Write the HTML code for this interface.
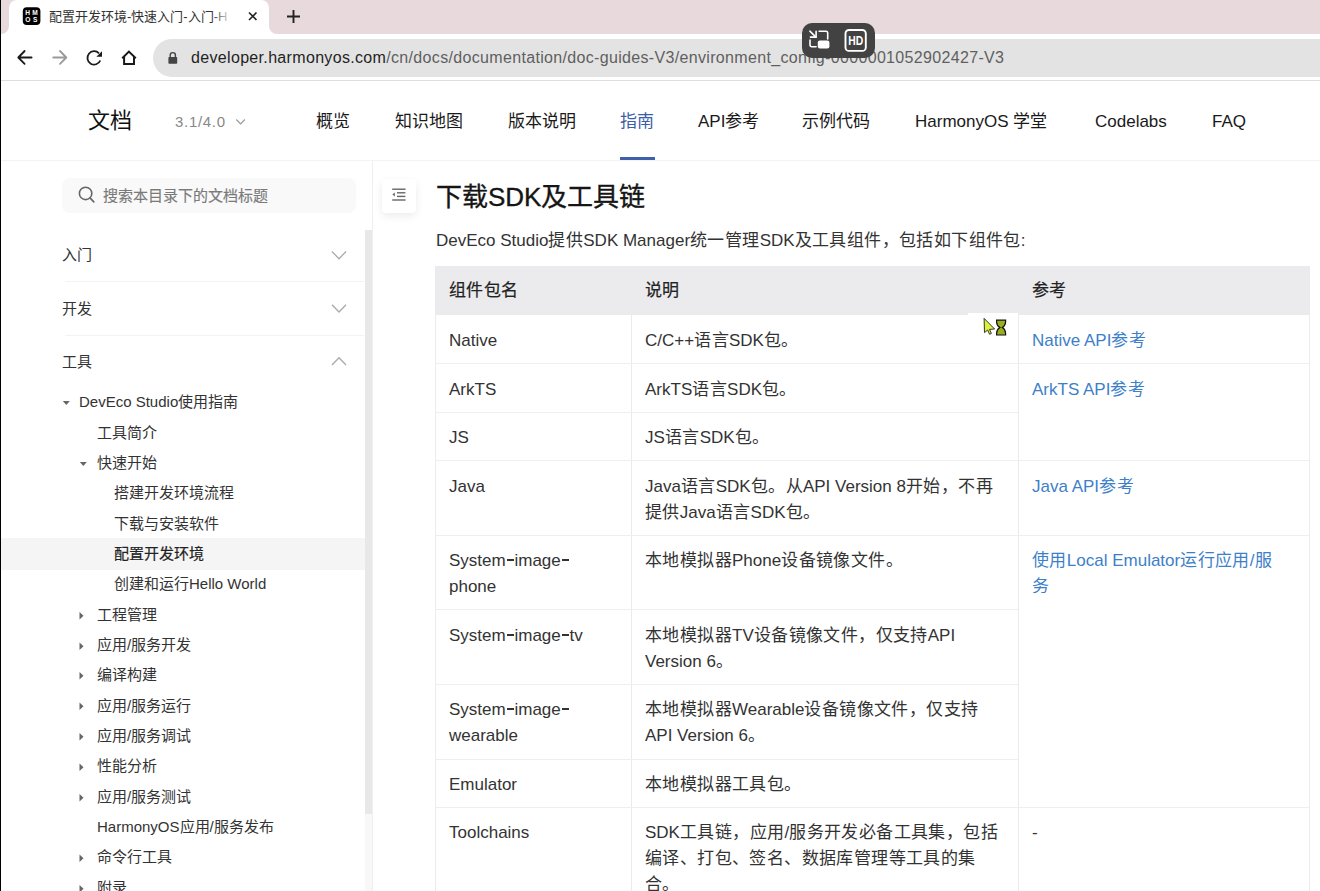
<!DOCTYPE html>
<html lang="zh-CN"><head><meta charset="utf-8">
<style>
*{box-sizing:border-box;margin:0;padding:0}
html,body{width:1320px;height:891px;overflow:hidden;background:#fff}
body{font-family:"Liberation Sans",sans-serif;color:#1a1a1a;position:relative}
.a{position:absolute;white-space:nowrap}
/* chrome */
#lb{left:0;top:0;width:1px;height:891px;background:#000;z-index:50}
#tabbar{left:0;top:0;width:1320px;height:34px;background:#e7d9dc}
#tab{left:9px;top:0;width:260px;height:40px;background:#fff;border-radius:8px 8px 0 0}
.flw{top:26px;width:8px;height:8px;background:#fff}
.flp{top:26px;width:8px;height:8px;background:#e7d9dc}
#addr{left:153px;top:39px;width:1200px;height:38px;border-radius:19px;background:#e3e3e3}
#sep{left:0;top:80px;width:1320px;height:1px;background:#dedede}
#url{left:191px;top:48px;font-size:16px;letter-spacing:0.33px;color:#5f5f5f;line-height:20px}
#url b{font-weight:normal;color:#1f1f1f}
#ov{left:802px;top:23px;width:73px;height:35px;border-radius:10px;background:#424242;z-index:40}
/* header */
#hdr{left:1px;top:81px;width:1319px;height:80px;border-bottom:1px solid #f3f3f3}
.nav{font-size:17px;line-height:24px;top:110px;color:#1a1a1a}
/* sidebar */
#sbb{left:372px;top:161px;width:1px;height:730px;background:#efefef}
#search{left:62px;top:178px;width:294px;height:35px;background:#f9f9f9;border-radius:8px}
.sb{font-size:15px;line-height:20px;color:#333}
.dv{left:65px;width:299px;height:1px;background:#f3f3f3}
#scr{left:365px;top:230px;width:7px;height:584px;background:#e8e8e8}
#trk{left:365px;top:814px;width:7px;height:77px;background:#f8f8f8}
.tri{width:0;height:0;border-left:4px solid transparent;border-right:4px solid transparent;border-top:4px solid #555}
.trr{width:0;height:0;border-top:4px solid transparent;border-bottom:4px solid transparent;border-left:4px solid #555}

.ct{font-size:17px;line-height:26px;color:#333;}
.ct .c{letter-spacing:0.4px}
.ct .h{display:inline-block;width:7px;height:1.7px;background:currentColor;vertical-align:5px;margin:0 0.9px}
.th{-webkit-text-stroke:0.2px #222;color:#222}
.lk{color:#3d7fc9;}
</style></head><body>
<div class="a" id="lb"></div>
<div class="a" id="tabbar"></div>
<div class="a" id="tab"></div>
<div class="a flw" style="left:1px"></div><div class="a flp" style="left:1px;border-bottom-right-radius:8px"></div>
<div class="a flw" style="left:269px"></div><div class="a flp" style="left:269px;border-bottom-left-radius:8px"></div>
<div class="a" id="addr"></div>
<div class="a" id="sep"></div>
<div class="a" id="url"><b>developer.harmonyos.com</b>/cn/docs/documentation/doc-guides-V3/environment_config-0000001052902427-V3</div>
<div class="a" id="ov"></div>

<div class="a" id="hdr"></div>
<div class="a" style="left:88px;top:106px;font-size:22px;line-height:30px;color:#111">文档</div>
<div class="a" style="left:175px;top:112px;font-size:15px;line-height:20px;color:#888;letter-spacing:0.7px">3.1/4.0</div>
<div class="a nav" style="left:316px">概览</div>
<div class="a nav" style="left:395px">知识地图</div>
<div class="a nav" style="left:508px">版本说明</div>
<div class="a nav" style="left:620px;color:#3b5ea6">指南</div>
<div class="a" style="left:620px;top:157px;width:35px;height:3px;background:#3f61ab"></div>
<div class="a nav" style="left:698px">API参考</div>
<div class="a nav" style="left:802px">示例代码</div>
<div class="a nav" style="left:915px">HarmonyOS 学堂</div>
<div class="a nav" style="left:1095px">Codelabs</div>
<div class="a nav" style="left:1212px">FAQ</div>

<div class="a" id="sbb"></div>
<div class="a" id="search"></div>
<div class="a" style="left:103px;top:186px;font-size:15px;line-height:20px;color:#7a7a7a;-webkit-text-stroke:0.15px #7a7a7a">搜索本目录下的文档标题</div>
<div class="a" id="scr"></div><div class="a" id="trk"></div>
<div class="a sb" style="left:62px;top:245px">入门</div>
<div class="a dv" style="top:281px"></div>
<div class="a sb" style="left:62px;top:299px">开发</div>
<div class="a dv" style="top:335px"></div>
<div class="a sb" style="left:62px;top:352px">工具</div>
<div class="a" style="left:1px;top:538px;width:364px;height:32px;background:#f5f5f5"></div>
<div class="a sb" style="left:79px;top:392px">DevEco Studio使用指南</div>
<div class="a sb" style="left:97px;top:423px">工具简介</div>
<div class="a sb" style="left:97px;top:453px">快速开始</div>
<div class="a sb" style="left:114px;top:483px">搭建开发环境流程</div>
<div class="a sb" style="left:114px;top:514px">下载与安装软件</div>
<div class="a sb" style="left:114px;top:544px;color:#222;-webkit-text-stroke:0.2px #222">配置开发环境</div>
<div class="a sb" style="left:114px;top:574px">创建和运行Hello World</div>
<div class="a sb" style="left:97px;top:605px">工程管理</div>
<div class="a sb" style="left:97px;top:635px">应用/服务开发</div>
<div class="a sb" style="left:97px;top:665px">编译构建</div>
<div class="a sb" style="left:97px;top:696px">应用/服务运行</div>
<div class="a sb" style="left:97px;top:726px">应用/服务调试</div>
<div class="a sb" style="left:97px;top:756px">性能分析</div>
<div class="a sb" style="left:97px;top:787px">应用/服务测试</div>
<div class="a sb" style="left:97px;top:817px">HarmonyOS应用/服务发布</div>
<div class="a sb" style="left:97px;top:847px">命令行工具</div>
<div class="a sb" style="left:97px;top:878px">附录</div>


<div class="a" id="toc" style="left:382px;top:179px;width:34px;height:34px;background:#fff;border-radius:4px;box-shadow:0 3px 8px rgba(0,0,0,.08)"></div>
<div class="a" style="left:436px;top:180px;font-size:26px;line-height:34px;color:#151515;-webkit-text-stroke:0.35px #151515">下载SDK及工具链</div>
<div class="a ct" style="left:436px;top:228px">DevEco Studio<span class="c">提供</span>SDK Manager<span class="c">统一管理</span>SDK<span class="c">及工具组件，包括如下组件包</span>:</div>
<div class="a" style="left:435px;top:266px;width:875px;height:49px;background:#ebebee"></div>
<div class="a" style="left:435px;top:315px;width:1px;height:576px;background:#ececec"></div>
<div class="a" style="left:1309px;top:315px;width:1px;height:576px;background:#ececec"></div>
<div class="a" style="left:631px;top:266px;width:1px;height:625px;background:#ebebed"></div>
<div class="a" style="left:1018px;top:266px;width:1px;height:625px;background:#ebebed"></div>
<div class="a" style="left:968px;top:313px;width:50px;height:3px;background:#fff;z-index:2"></div>
<div class="a" style="left:435px;top:363px;width:875px;height:1px;background:#efefef"></div>
<div class="a" style="left:435px;top:412px;width:583px;height:1px;background:#efefef"></div>
<div class="a" style="left:435px;top:460px;width:875px;height:1px;background:#efefef"></div>
<div class="a" style="left:435px;top:535px;width:875px;height:1px;background:#efefef"></div>
<div class="a" style="left:435px;top:609px;width:583px;height:1px;background:#efefef"></div>
<div class="a" style="left:435px;top:684px;width:583px;height:1px;background:#efefef"></div>
<div class="a" style="left:435px;top:759px;width:583px;height:1px;background:#efefef"></div>
<div class="a" style="left:435px;top:807px;width:875px;height:1px;background:#efefef"></div>
<div class="a ct th" style="left:449px;top:278px"><span class="c">组件包名</span></div>
<div class="a ct th" style="left:645px;top:278px"><span class="c">说明</span></div>
<div class="a ct th" style="left:1032px;top:278px"><span class="c">参考</span></div>
<div class="a ct " style="left:449px;top:328px">Native</div>
<div class="a ct " style="left:645px;top:328px">C/C++<span class="c">语言</span>SDK<span class="c">包。</span></div>
<div class="a ct lk" style="left:1032px;top:328px">Native API<span class="c">参考</span></div>
<div class="a ct " style="left:449px;top:377px">ArkTS</div>
<div class="a ct " style="left:645px;top:377px">ArkTS<span class="c">语言</span>SDK<span class="c">包。</span></div>
<div class="a ct lk" style="left:1032px;top:377px">ArkTS API<span class="c">参考</span></div>
<div class="a ct " style="left:449px;top:425px">JS</div>
<div class="a ct " style="left:645px;top:425px">JS<span class="c">语言</span>SDK<span class="c">包。</span></div>
<div class="a ct " style="left:449px;top:474px">Java</div>
<div class="a ct " style="left:645px;top:474px">Java<span class="c">语言</span>SDK<span class="c">包。从</span>API Version 8<span class="c">开始，不再</span><br><span class="c">提供</span>Java<span class="c">语言</span>SDK<span class="c">包。</span></div>
<div class="a ct lk" style="left:1032px;top:474px">Java API<span class="c">参考</span></div>
<div class="a ct " style="left:449px;top:548px">System<span class="h"></span>image<span class="h"></span><br>phone</div>
<div class="a ct " style="left:645px;top:548px"><span class="c">本地模拟器</span>Phone<span class="c">设备镜像文件。</span></div>
<div class="a ct lk" style="left:1032px;top:548px"><span class="c">使用</span>Local Emulator<span class="c">运行应用</span>/<span class="c">服</span><br><span class="c">务</span></div>
<div class="a ct " style="left:449px;top:623px">System<span class="h"></span>image<span class="h"></span>tv</div>
<div class="a ct " style="left:645px;top:623px"><span class="c">本地模拟器</span>TV<span class="c">设备镜像文件，仅支持</span>API<br>Version 6<span class="c">。</span></div>
<div class="a ct " style="left:449px;top:697px">System<span class="h"></span>image<span class="h"></span><br>wearable</div>
<div class="a ct " style="left:645px;top:697px"><span class="c">本地模拟器</span>Wearable<span class="c">设备镜像文件，仅支持</span><br>API Version 6<span class="c">。</span></div>
<div class="a ct " style="left:449px;top:772px">Emulator</div>
<div class="a ct " style="left:645px;top:772px"><span class="c">本地模拟器工具包。</span></div>
<div class="a ct " style="left:449px;top:820px">Toolchains</div>
<div class="a ct " style="left:645px;top:820px">SDK<span class="c">工具链，应用</span>/<span class="c">服务开发必备工具集，包括</span><br><span class="c">编译、打包、签名、数据库管理等工具的集</span><br><span class="c">合。</span></div>
<div class="a ct " style="left:1032px;top:820px">-</div>
<!-- chrome icons -->
<svg class="a" style="left:0;top:0;z-index:5" width="1320" height="80" viewBox="0 0 1320 80">
 <rect x="22.8" y="7.2" width="17.6" height="17.9" rx="4" fill="#000"/>
 <g fill="#fff" font-family="Liberation Sans" font-weight="bold" font-size="6.6">
  <text x="25.3" y="14.8">H</text><text x="32.2" y="14.8">M</text>
  <text x="25.2" y="22.2">O</text><text x="33.0" y="22.2">S</text>
 </g>
 <path d="M249 12.5 L256.5 20 M256.5 12.5 L249 20" stroke="#222" stroke-width="1.6"/>
 <path d="M293.5 10 V23 M287 16.5 H300" stroke="#222" stroke-width="1.9"/>
 <path d="M31.6 57.5 H18.8 M24.6 51 L18.3 57.5 L24.6 63.8" stroke="#1a1a1a" stroke-width="1.8" fill="none" stroke-linecap="round" stroke-linejoin="round"/>
 <path d="M53.2 57.5 H66 M60 51 L66.3 57.5 L60 63.8" stroke="#9a9a9a" stroke-width="1.8" fill="none" stroke-linecap="round" stroke-linejoin="round"/>
 <path d="M100.3 60.5 A6.7 6.7 0 1 1 99 53.3" stroke="#1a1a1a" stroke-width="1.8" fill="none"/>
 <path d="M102 51.2 V56.8 H96.4 Z" fill="#1a1a1a"/>
 <path d="M122.2 58.2 L128.9 51.6 L135.8 58.2" stroke="#1a1a1a" stroke-width="2" fill="none" stroke-linejoin="miter"/><path d="M124.1 56.8 V64 H134 V56.8" stroke="#1a1a1a" stroke-width="2" fill="none"/>
 <path d="M170.2 57.5 V55.2 A2.6 2.6 0 0 1 175.4 55.2 V57.5" stroke="#444" stroke-width="1.4" fill="none"/>
 <rect x="168.4" y="57" width="8.8" height="6.8" rx="0.8" fill="#444"/>
</svg>
<div class="a" style="left:49px;top:9px;font-size:13px;line-height:16px;color:#333;z-index:5">配置开发环境-快速入门-入门-H</div>
<div class="a" style="left:212px;top:5px;width:24px;height:24px;z-index:6;background:linear-gradient(90deg,rgba(255,255,255,0),#fff 85%)"></div>
<svg class="a" style="left:802px;top:23px;z-index:41" width="73" height="35" viewBox="0 0 73 35">
 <g stroke="#fff" stroke-width="1.6" fill="none" stroke-linecap="round">
  <path d="M7.9 8.1 L13.4 13.6"/><path d="M8.4 14.1 H14.1 V8.4"/>
  <path d="M17.1 8.3 H24 A1.7 1.7 0 0 1 25.7 10 V16"/>
  <path d="M8 17.1 V22.1 A1.7 1.7 0 0 0 9.7 23.8 H14.1"/>
  <rect x="43.5" y="7" width="20.3" height="20.9" rx="3.5" stroke-width="1.9"/>
 </g>
 <rect x="15.8" y="17.4" width="11.6" height="8" rx="2" fill="#fff"/>
 <text x="46.3" y="22.4" fill="#fff" font-family="Liberation Sans" font-weight="bold" font-size="13.2" textLength="15" lengthAdjust="spacingAndGlyphs">HD</text>
</svg>
<!-- header chevron -->
<svg class="a" style="left:230px;top:112px" width="20" height="20" viewBox="230 112 20 20">
 <path d="M236.3 119.5 L240.6 124 L244.9 119.5" stroke="#999" stroke-width="1.2" fill="none"/>
</svg>
<!-- sidebar icons -->
<svg class="a" style="left:0;top:160px" width="372" height="731" viewBox="0 160 372 731">
 <circle cx="85.6" cy="193.4" r="6.2" stroke="#666" stroke-width="1.6" fill="none"/>
 <path d="M90.2 198.2 L93.8 201.8" stroke="#666" stroke-width="1.7" stroke-linecap="round"/>
 <g stroke="#aaa" stroke-width="1.3" fill="none">
  <path d="M332 251.5 L339 258.8 L346 251.5"/>
  <path d="M332 304.7 L339 312 L346 304.7"/>
  <path d="M332 365 L339 357.7 L346 365"/>
 </g>
 <g fill="#666">
  <path d="M62.8 401 H69.8 L66.3 405 Z"/>
  <path d="M79.8 462 H86.8 L83.3 466 Z"/>
  <path d="M79.5 612 V619.5 L83.5 615.75 Z"/>
  <path d="M79.5 642.5 V650 L83.5 646.25 Z"/>
  <path d="M79.5 672 V679.5 L83.5 675.75 Z"/>
  <path d="M79.5 702.5 V710 L83.5 706.25 Z"/>
  <path d="M79.5 733 V740.5 L83.5 736.75 Z"/>
  <path d="M79.5 763.5 V771 L83.5 767.25 Z"/>
  <path d="M79.5 794 V801.5 L83.5 797.75 Z"/>
  <path d="M79.5 854.5 V862 L83.5 858.25 Z"/>
  <path d="M79.5 885 V892.5 L83.5 888.75 Z"/>
 </g>
</svg>
<!-- toc icon -->
<svg class="a" style="left:382px;top:179px;z-index:3" width="34" height="34" viewBox="382 179 34 34">
 <g stroke="#666" stroke-width="1.4">
  <path d="M392.2 189.2 H405.6"/><path d="M397 192.8 H405.4"/><path d="M397 196.4 H405.4"/><path d="M392.2 200 H405.6"/>
 </g>
 <path d="M394.8 192.6 V196.4 L392.4 194.5 Z" fill="#666"/>
</svg>
<!-- cursor -->
<svg class="a" style="left:980px;top:314px;z-index:20" width="30" height="25" viewBox="980 314 30 25">
 <path d="M984.1 318.4 L984.5 332.6 L987.6 330 L989.6 334.3 L991.4 333.4 L989.5 329.4 L994.6 329 Z" fill="#dcf23a" stroke="#222" stroke-width="0.9" stroke-linejoin="round"/>
 <path d="M996.6 320.2 H1005.6 V322 Q1005.4 325.8 1002.3 327.6 Q1005.4 329.4 1005.6 333.2 V335 H996.6 V333.2 Q996.8 329.4 999.9 327.6 Q996.8 325.8 996.6 322 Z" fill="#9aae22" stroke="#111" stroke-width="1.2"/>
</svg>
</body></html>
